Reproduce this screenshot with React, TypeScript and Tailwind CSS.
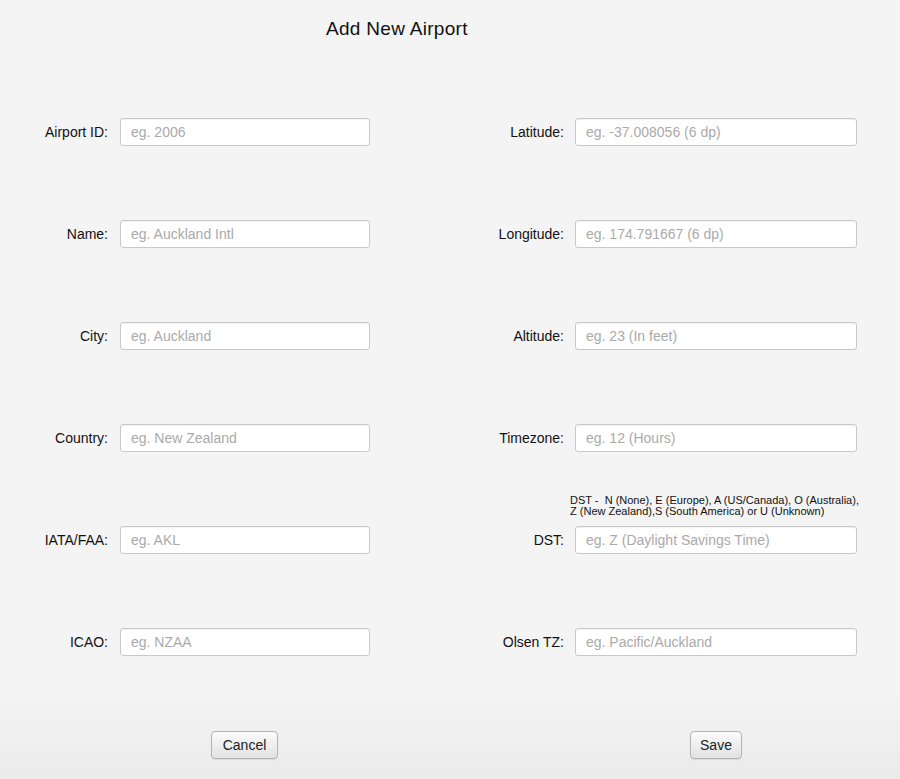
import React from "react";

const left = [
  { label: "Airport ID:", ph: "eg. 2006" },
  { label: "Name:", ph: "eg. Auckland Intl" },
  { label: "City:", ph: "eg. Auckland" },
  { label: "Country:", ph: "eg. New Zealand" },
  { label: "IATA/FAA:", ph: "eg. AKL" },
  { label: "ICAO:", ph: "eg. NZAA" },
];

const right = [
  { label: "Latitude:", ph: "eg. -37.008056 (6 dp)" },
  { label: "Longitude:", ph: "eg. 174.791667 (6 dp)" },
  { label: "Altitude:", ph: "eg. 23 (In feet)" },
  { label: "Timezone:", ph: "eg. 12 (Hours)" },
  { label: "DST:", ph: "eg. Z (Daylight Savings Time)" },
  { label: "Olsen TZ:", ph: "eg. Pacific/Auckland" },
];

function Field({ ph, width }: { ph: string; width: string }) {
  return (
    <input
      placeholder={ph}
      className={`${width} h-[28px] bg-white border border-[#c9c9c9] rounded-[3px] px-[10px] text-[14px] text-[#333] placeholder:text-[#aaaaaa] shadow-[inset_0_1px_1px_rgba(0,0,0,0.06)] outline-none`}
    />
  );
}

function Button({ children, width }: { children: React.ReactNode; width: string }) {
  return (
    <button
      className={`${width} h-[28px] rounded-[4px] border border-[#b3b3b3] bg-gradient-to-b from-[#fbfbfb] to-[#e2e2e2] text-[14px] text-[#222] shadow-[0_1px_1px_rgba(0,0,0,0.08)]`}
    >
      {children}
    </button>
  );
}

export default function App() {
  return (
    <div
      className="w-[900px] h-[779px] bg-[#f4f4f4] flex flex-col text-[#111]"
      style={{ fontFamily: '"Liberation Sans", Arial, sans-serif' }}
    >
      <h1 className="pl-[326px] pt-[18px] text-[19px] tracking-[0.3px] leading-[22px] h-[81px]">Add New Airport</h1>

      <div className="flex">
        <div className="w-[450px] flex flex-col">
          {left.map((f) => (
            <div key={f.label} className="h-[102px] flex items-center">
              <label className="w-[108px] text-right text-[14px]">{f.label}</label>
              <div className="ml-[12px]">
                <Field ph={f.ph} width="w-[250px]" />
              </div>
            </div>
          ))}
        </div>
        <div className="w-[450px] flex flex-col">
          {right.map((f) => (
            <div key={f.label} className="h-[102px] flex items-center">
              <label className="w-[114px] text-right text-[14px]">{f.label}</label>
              <div className="ml-[11px] relative">
                {f.label === "DST:" && (
                  <p className="absolute left-[-5px] bottom-[37px] w-[300px] text-[11px] leading-[11px] text-[#111]">
                    DST -&nbsp; N (None), E (Europe), A (US/Canada), O (Australia),
                    <br />
                    Z (New Zealand),S (South America) or U (Unknown)
                  </p>
                )}
                <Field ph={f.ph} width="w-[282px]" />
              </div>
            </div>
          ))}
        </div>
      </div>

      <div className="flex-1 flex items-start pt-[38px] bg-gradient-to-b from-[#f4f4f4] to-[#ebebeb]">
        <div className="w-[450px] pl-[211px]">
          <Button width="w-[67px]">Cancel</Button>
        </div>
        <div className="w-[450px] pl-[240px]">
          <Button width="w-[52px]">Save</Button>
        </div>
      </div>
    </div>
  );
}
